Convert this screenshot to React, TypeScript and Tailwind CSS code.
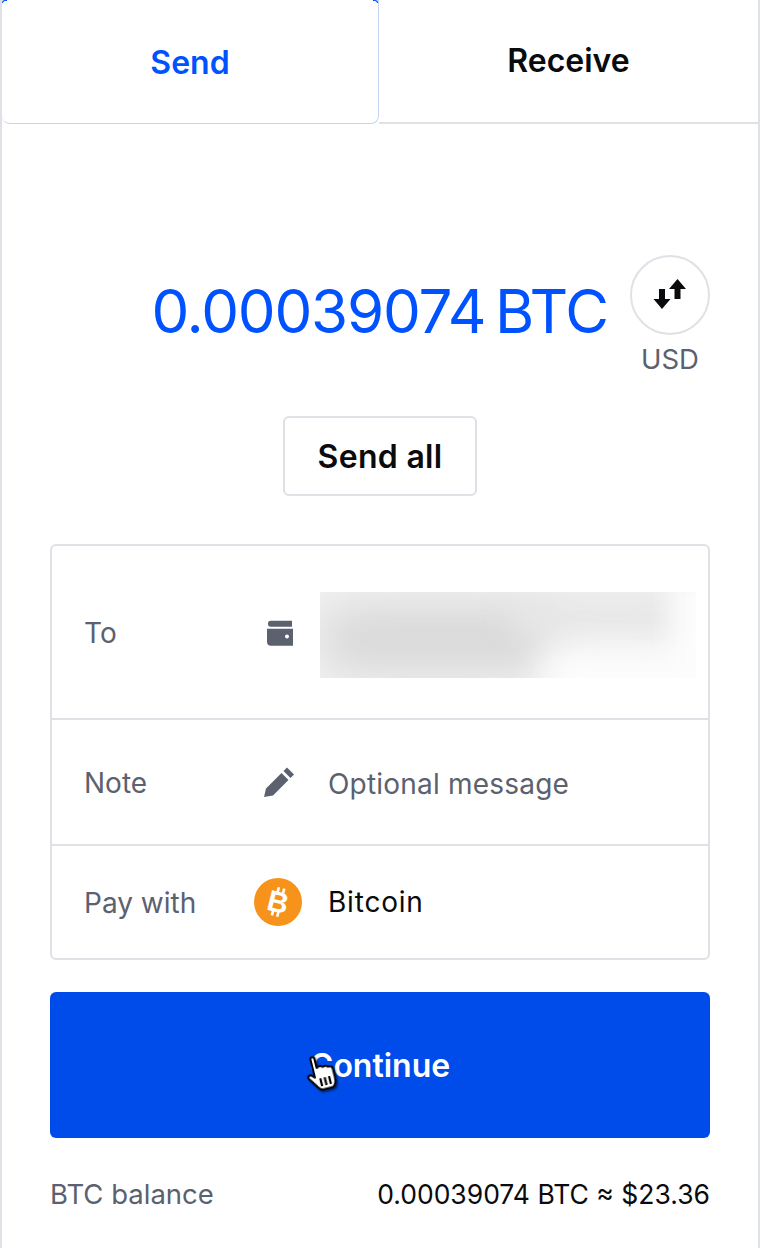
import React from 'react'

const Row = ({
  label,
  height,
  icon,
  children,
}: {
  label: string
  height: string
  icon: React.ReactNode
  children: React.ReactNode
}) => (
  <div className={`flex items-center pl-[32px] ${height}`}>
    <span className="w-[166px] pt-[2px] text-[28px] text-[#5b616e]">{label}</span>
    <span className="flex w-[56px] justify-center">{icon}</span>
    {children}
  </div>
)

const WalletIcon = () => (
  <svg className="ml-[4px]" width="28" height="28" viewBox="0 0 28 28" fill="#5b616e">
    <path d="M2 5.500A2.700 2.700 0 0 1 4.700 2.800H26v6H4.700A2.700 2.700 0 0 1 2 6z" />
    <path fillRule="evenodd" d="M1 10.800h26v17H5a4 4 0 0 1-4-4zM21 16.500a2 2 0 1 0 .01 0z" />
  </svg>
)

const PencilIcon = () => (
  <svg className="ml-[2px]" width="32" height="32" viewBox="0 0 32 32" fill="#5b616e">
    <path d="M1 31l2-8.500L18.500 7l7 7L10 29.500z" />
    <path d="M20.500 5l3.500-3.500 7 7L27.500 12z" />
  </svg>
)

const BitcoinIcon = () => (
  <svg width="48" height="48" viewBox="0 0 48 48">
    <circle cx="24" cy="24" r="24" fill="#f7931a" />
    <g transform="rotate(14 24 24)">
      <text
        x="24"
        y="34"
        textAnchor="middle"
        fontSize="29"
        fontWeight="700"
        fill="#fff"
        fontFamily="'Liberation Sans', sans-serif"
      >
        B
      </text>
      <path d="M20 9.500h2.600v5H20zM25.500 9.500h2.600v5h-2.600zM20 33.500h2.600v5H20zM25.500 33.500h2.600v5h-2.600z" fill="#fff" />
    </g>
  </svg>
)

const SwapIcon = () => (
  <svg width="34" height="34" viewBox="0 0 34 34" fill="#0a0b0d">
    <path d="M6 11h6v10h5.500L9 31 .5 21H6z" />
    <path d="M21.500 21V11h-5.500L24.500 1 33 11h-5.500v10z" />
  </svg>
)

const HandCursor = () => (
  <svg
    className="absolute top-[62px] left-[256px] -rotate-[14deg] drop-shadow-[1px_2px_1px_rgba(0,0,0,0.6)]"
    width="30"
    height="38"
    viewBox="0 0 30 38"
  >
    <path
      d="M8 3.500c0-2.800 4-2.800 4 0V13c3-1.500 5-1 6 .5 2-.8 4-.3 5 1 2.500-.5 4.500 .7 4.500 3V27c0 4-2 8.500-5 8.500H13c-2 0-3-1-4-3L2 22c-1.500-2.500 1.500-4.500 3.500-2.500L8 22z"
      fill="#fff"
      stroke="#000"
      strokeWidth="2"
      strokeLinejoin="round"
    />
    <path d="M13 24v8M17.500 24v8M22 24v8" stroke="#000" strokeWidth="2.200" />
  </svg>
)

export default function App() {
  return (
    <div className="flex h-[1248px] w-[760px] flex-col overflow-hidden border-r-2 border-l-2 border-[#e0e1e6] bg-white font-['Inter',sans-serif] text-[#0a0b0d]">
      <div className="flex h-[124px]">
        <div className="relative flex w-[377px] items-center justify-center rounded-b-[8px] border-r border-b border-[#c5d4f5] pt-[2px] text-[32px] font-semibold text-[#0052ff]">
          <span className="absolute top-0 left-0 h-[3px] w-[5px] rounded-tl-[6px] border-t border-l border-[#0052ff]" />
          <span className="absolute top-0 right-0 h-[3px] w-[5px] rounded-tr-[6px] border-t border-r border-[#0052ff]" />
          Send
        </div>
        <div className="flex flex-1 items-center justify-center border-b-2 border-[#e0e1e6] text-[32px] font-semibold">
          Receive
        </div>
      </div>

      <div className="flex flex-col px-[48px]">
        <div className="mt-[131px] flex items-start justify-end">
          <span className="mt-[22px] mr-[22px] text-[60px] leading-[68px] tracking-[-1.2px] [word-spacing:-6px] text-[#0052ff]">
            0.00039074 BTC
          </span>
          <div className="flex flex-col items-center">
            <button className="flex h-[80px] w-[80px] items-center justify-center rounded-full border-2 border-[#e0e1e6]">
              <SwapIcon />
            </button>
            <span className="mt-[7px] text-[27.5px] leading-[34px] text-[#5b616e]">USD</span>
          </div>
        </div>

        <div className="mt-[40px] flex justify-center">
          <button className="h-[80px] w-[194px] rounded-[6px] border-2 border-[#e0e1e6] pt-[2px] text-[32px] font-semibold tracking-[0.3px]">
            Send all
          </button>
        </div>

        <div className="mt-[48px] flex flex-col divide-y-2 divide-[#e0e1e6] rounded-[6px] border-2 border-[#e0e1e6]">
          <Row label="To" height="h-[174px]" icon={<WalletIcon />}>
            <div className="relative mt-[6px] ml-[14px] h-[86px] w-[376px] overflow-hidden bg-[#f1f1f1]">
              <div className="absolute top-[14px] left-[0px] h-[66px] w-[230px] rounded-full bg-[#d8d8d8] blur-[22px]" />
              <div className="absolute top-[6px] left-[190px] h-[36px] w-[170px] rounded-full bg-[#e6e6e6] blur-[16px]" />
              <div className="absolute top-[58px] left-[220px] h-[50px] w-[180px] rounded-full bg-[#fdfdfd] blur-[16px]" />
              <div className="absolute top-[-10px] right-[-20px] h-[110px] w-[44px] bg-[#fcfcfc] blur-[12px]" />
            </div>
          </Row>
          <Row label="Note" height="h-[126px]" icon={<PencilIcon />}>
            <span className="mt-[4px] ml-[22px] text-[28px] tracking-[0.2px] text-[#5b616e]">Optional message</span>
          </Row>
          <Row label="Pay with" height="h-[112px]" icon={<BitcoinIcon />}>
            <span className="ml-[22px] text-[28px] tracking-[0.8px]">Bitcoin</span>
          </Row>
        </div>

        <button className="relative mt-[32px] h-[146px] rounded-[6px] bg-[#004ceb] pt-[2px] text-[32px] font-semibold text-white">
          Continue
          <HandCursor />
        </button>

        <div className="mt-[36px] flex items-center justify-between">
          <span className="text-[27.5px] text-[#5b616e]">BTC balance</span>
          <span className="text-[26.5px]">0.00039074 BTC ≈ $23.36</span>
        </div>
      </div>
    </div>
  )
}
